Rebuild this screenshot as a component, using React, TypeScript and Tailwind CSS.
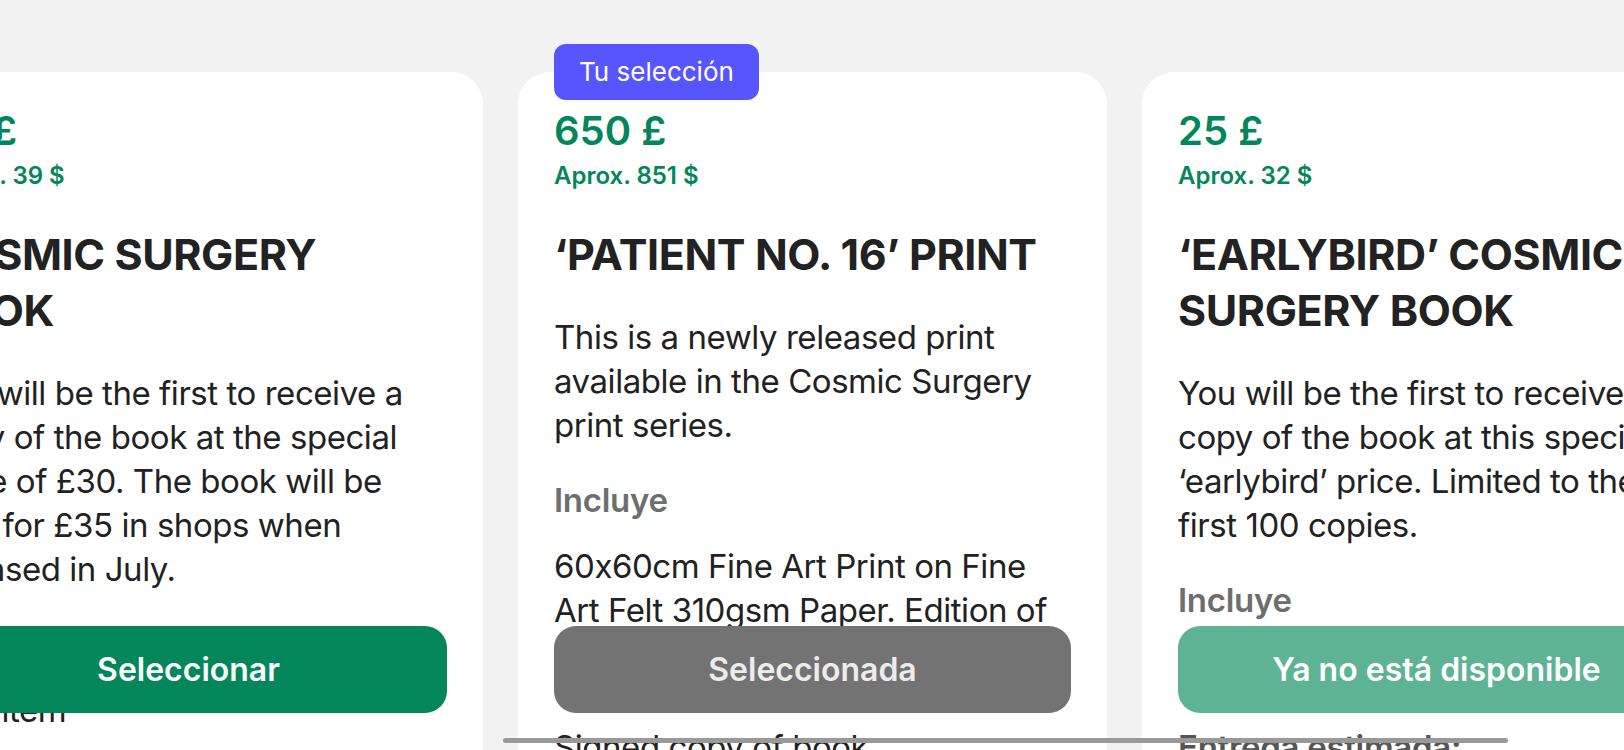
type Plan = {
  price: string;
  approx: string;
  title: string;
  description: string;
  includes: string[];
  extra?: string;
  badge?: string;
  action: "select" | "selected" | "soldout";
};

const plans: Plan[] = [
  {
    price: "30 £",
    approx: "Aprox. 39 $",
    title: "COSMIC SURGERY BOOK",
    description:
      "You will be the first to receive a copy of the book at the special price of £30. The book will be sold for £35 in shops when released in July.",
    includes: ["One item"],
    action: "select",
  },
  {
    price: "650 £",
    approx: "Aprox. 851 $",
    title: "‘PATIENT NO. 16’ PRINT",
    description:
      "This is a newly released print available in the Cosmic Surgery print series.",
    includes: [
      "60x60cm Fine Art Print on Fine Art Felt 310gsm Paper. Edition of 50.",
      "Signed copy of book",
    ],
    badge: "Tu selección",
    action: "selected",
  },
  {
    price: "25 £",
    approx: "Aprox. 32 $",
    title: "‘EARLYBIRD’ COSMIC SURGERY BOOK",
    description:
      "You will be the first to receive a copy of the book at this special ‘earlybird’ price. Limited to the first 100 copies.",
    includes: ["Cosmic Surgery book"],
    extra: "Entrega estimada:",
    action: "soldout",
  },
];

function ActionButton({ action }: { action: Plan["action"] }) {
  if (action === "selected") {
    return (
      <button className="absolute left-[36px] right-[36px] top-[554px] h-[87px] rounded-[22px] bg-[#737373] text-[32px] font-semibold text-[#ececec]">
        Seleccionada
      </button>
    );
  }
  if (action === "soldout") {
    return (
      <button className="absolute left-[36px] right-[36px] top-[554px] h-[87px] rounded-[22px] bg-[#5db393] text-[32px] font-semibold text-white">
        Ya no está disponible
      </button>
    );
  }
  return (
    <button className="absolute left-[36px] right-[36px] top-[554px] h-[87px] rounded-[22px] bg-[#03875a] text-[32px] font-semibold text-white">
      Seleccionar
    </button>
  );
}

function PlanCard({ plan }: { plan: Plan }) {
  return (
    <div className="relative flex h-[720px] w-[589px] shrink-0 flex-col rounded-[32px] bg-white px-[36px] pt-[35px]">
      {plan.badge && (
        <div className="absolute left-[36px] top-[-28px] h-[56px] rounded-[12px] bg-[#5855ff] px-[25px] text-[26px] leading-[56px] text-white">
          {plan.badge}
        </div>
      )}
      <div className="flex flex-col gap-[5px] text-[#03875a]">
        <span className="text-[40px] font-semibold leading-[48px]">{plan.price}</span>
        <span className="text-[24px] font-semibold leading-[32px]">{plan.approx}</span>
      </div>
      <h2 className="mt-[34px] max-w-[500px] text-[43px] font-bold leading-[56px] tracking-[-0.4px] text-[#222]">
        {plan.title}
      </h2>
      <p className="mt-[33px] text-[33px] leading-[44px] tracking-[-0.45px] text-[#222]">
        {plan.description}
      </p>
      <h3 className="mt-[31px] text-[33px] font-semibold leading-[44px] tracking-[-0.3px] text-[#6e6e6e]">
        Incluye
      </h3>
      <ul className="mt-[22px] flex flex-col gap-[49px] text-[33px] leading-[44px] tracking-[-0.45px] text-[#222]">
        {plan.includes.map((item) => (
          <li key={item}>{item}</li>
        ))}
      </ul>
      {plan.extra && (
        <h3 className="mt-[37px] text-[33px] font-semibold leading-[44px] tracking-[-0.3px] text-[#555]">
          {plan.extra}
        </h3>
      )}
      <ActionButton action={plan.action} />
    </div>
  );
}

export default function App() {
  return (
    <div className="relative h-[750px] w-full overflow-hidden bg-[#f2f2f2] font-['Inter',sans-serif] [font-feature-settings:'calt'_0]">
      <div className="ml-[-106px] flex gap-[35px] pt-[72px]">
        {plans.map((plan) => (
          <PlanCard key={plan.title} plan={plan} />
        ))}
      </div>
      <div className="absolute left-[503px] top-[738px] h-[5px] w-[1005px] rounded-full bg-[#999]" />
    </div>
  );
}
